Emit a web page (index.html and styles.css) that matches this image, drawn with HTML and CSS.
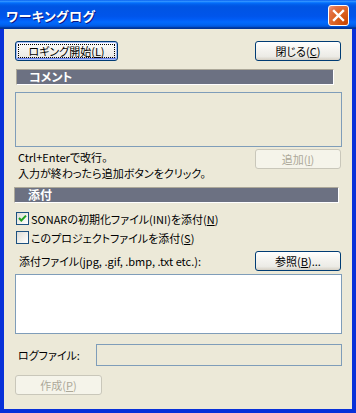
FILE: index.html
```html
<!DOCTYPE html>
<html lang="ja">
<head>
<meta charset="utf-8">
<title>ワーキングログ</title>
<link rel="stylesheet" href="styles.css">
</head>
<body>
<div class="window">
  <div class="titlebar">
    <span class="title">ワーキングログ</span>
    <span class="close" aria-label="閉じる">
      <svg width="13" height="13" viewBox="0 0 13 13"><path d="M2 2 L11 11 M11 2 L2 11" stroke="#fff" stroke-width="2.4" stroke-linecap="square"/></svg>
    </span>
  </div>
  <div class="client">
    <div class="top-row">
      <button class="btn btn-default btn-start"><span class="focus"><span class="lbl">ロギング開始(<u>L</u>)</span></span></button>
      <button class="btn btn-std"><span class="lbl">閉じる(<u>C</u>)</span></button>
    </div>

    <div class="section section-comment">コメント</div>
    <div class="textbox comment-box"></div>

    <div class="hint-row">
      <div class="hint">
        <div>Ctrl+Enterで改行。</div>
        <div>入力が終わったら追加ボタンをクリック。</div>
      </div>
      <button class="btn btn-std btn-disabled"><span class="lbl">追加(<u>I</u>)</span></button>
    </div>

    <div class="section section-attach">添付</div>

    <label class="check first">
      <span class="box"><svg width="11" height="11" viewBox="0 0 11 11"><path d="M2 5 L4.3 7.5 L9 2.6" fill="none" stroke="#21a121" stroke-width="2"/></svg></span>
      <span>SONARの初期化ファイル(INI)を添付(<u>N</u>)</span>
    </label>
    <label class="check">
      <span class="box"></span>
      <span>このプロジェクトファイルを添付(<u>S</u>)</span>
    </label>

    <div class="attach-row">
      <span class="attach-label">添付ファイル(jpg, .gif, .bmp, .txt etc.):</span>
      <button class="btn btn-std"><span class="lbl">参照(<u>B</u>)...</span></button>
    </div>
    <div class="listbox"></div>

    <div class="log-row">
      <span class="log-label">ログファイル:</span>
      <div class="textbox log-input"></div>
    </div>

    <button class="btn btn-make btn-disabled"><span class="lbl">作成(<u>P</u>)</span></button>
  </div>
</div>
</body>
</html>
```
FILE: styles.css
```css
html, body {
  margin: 0;
  padding: 0;
  background: #ece9d8;
}

body {
  font-family: "Noto Sans CJK JP", "Noto Sans", sans-serif;
  font-size: 11px;
  font-feature-settings: "palt";
  color: #000;
}

.window {
  width: 356px;
  height: 413px;
  box-sizing: border-box;
  display: flex;
  flex-direction: column;
  background: #0831d9;
  overflow: hidden;
}

.titlebar {
  height: 29px;
  flex: none;
  display: flex;
  align-items: center;
  justify-content: space-between;
  padding: 0 6px 0 6px;
  background: linear-gradient(#0058ee 0%, #3593ff 4%, #288eff 6%, #127dff 8%, #036ffc 10%, #0262ee 14%, #0057e5 20%, #0054e3 24%, #0055eb 56%, #005bf5 66%, #026afe 76%, #0062ef 86%, #0052d6 92%, #0040ab 94%, #003092 100%);
}

.title {
  color: #fff;
  font-weight: bold;
  font-size: 13px;
  letter-spacing: 0.5px;
  text-shadow: 1px 1px 0 #0a1883;
  margin-top: 1px;
}

.close {
  width: 19px;
  height: 19px;
  border: 1px solid #fff;
  border-radius: 3px;
  display: flex;
  align-items: center;
  justify-content: center;
  background: radial-gradient(circle at 90% 90%, #cc4600 0%, #dc6527 55%, #e5734a 80%, #f0a087 100%);
  margin-top: 2px;
  margin-right: 1px;
}

.client {
  flex: 1;
  margin: 0 4px 4px 4px;
  padding: 12px 10px 0 11px;
  background: #ece9d8;
  display: flex;
  flex-direction: column;
  align-items: flex-start;
}

/* Buttons */
.btn {
  font: inherit;
  font-feature-settings: "palt";
  height: 20px;
  padding: 0;
  border: 1px solid #003c74;
  border-radius: 3px;
  background: linear-gradient(#ffffff 0%, #f5f4f0 40%, #ecebe6 80%, #d6d0c5 100%);
  color: #000;
  display: flex;
  align-items: center;
  justify-content: center;
  box-sizing: border-box;
  line-height: 1;
}

.lbl {
  white-space: nowrap;
  display: block;
}

.btn u {
  text-decoration: underline;
  text-underline-offset: 1px;
}

.btn-std {
  width: 86px;
}

.btn-default {
  box-shadow: inset 0 0 0 1px #a8bef7, inset 0 -1px 0 1px #6982ee;
}

.btn-start {
  width: 103px;
}

.btn-start .focus {
  border: 1px dotted #000;
  width: 95px;
  height: 12px;
  display: flex;
  align-items: center;
  justify-content: center;
  box-sizing: content-box;
}

.btn-disabled {
  border-color: #c9c7ba;
  background: #f5f4ea;
  color: #aca899;
  box-shadow: none;
}

.top-row {
  width: 326px;
  display: flex;
  justify-content: space-between;
  align-items: center;
}

/* Section bars */
.section {
  height: 14px;
  background: #6c7182;
  color: #fff;
  font-weight: bold;
  font-size: 12px;
  line-height: 14px;
  border-top: 1px solid #aca899;
  border-left: 1px solid #aca899;
  border-right: 1px solid #fff;
  border-bottom: 1px solid #fff;
  box-sizing: content-box;
}

.section-comment {
  margin: 8px 0 0 1px;
  padding-left: 12px;
  width: 304px;
}

.section-attach {
  width: 310px;
  margin: 6px 0 0 -1px;
  padding-left: 13px;
}

.textbox {
  border: 1px solid #7f9db9;
  box-sizing: border-box;
  background: #ece9d8;
}

.comment-box {
  width: 327px;
  height: 55px;
  margin-top: 7px;
}

.hint-row {
  width: 326px;
  display: flex;
  justify-content: space-between;
  align-items: flex-start;
  margin-top: 2px;
}

.hint {
  padding-left: 3px;
  line-height: 16px;
}

.check {
  display: flex;
  align-items: center;
  height: 19px;
  margin-left: 1px;
}

.check.first {
  margin-top: 6px;
}

.box {
  width: 13px;
  height: 13px;
  box-sizing: border-box;
  border: 1px solid #1c5180;
  background: linear-gradient(135deg, #dcdcd7 0%, #f2f2ee 60%, #ffffff 100%);
  margin-right: 2px;
  display: flex;
  align-items: center;
  justify-content: center;
}

.attach-row {
  width: 326px;
  display: flex;
  justify-content: space-between;
  align-items: center;
  margin-top: 4px;
}

.attach-label {
  padding-left: 4px;
}

.listbox {
  width: 327px;
  height: 60px;
  margin-top: 3px;
  border: 1px solid #7f9db9;
  box-sizing: border-box;
  background: #fff;
}

.log-row {
  width: 327px;
  display: flex;
  align-items: center;
  justify-content: space-between;
  margin-top: 10px;
}

.log-label {
  padding-left: 3px;
}

.log-input {
  width: 246px;
  height: 22px;
}

.btn-make {
  width: 87px;
  margin-top: 9px;
}
```
